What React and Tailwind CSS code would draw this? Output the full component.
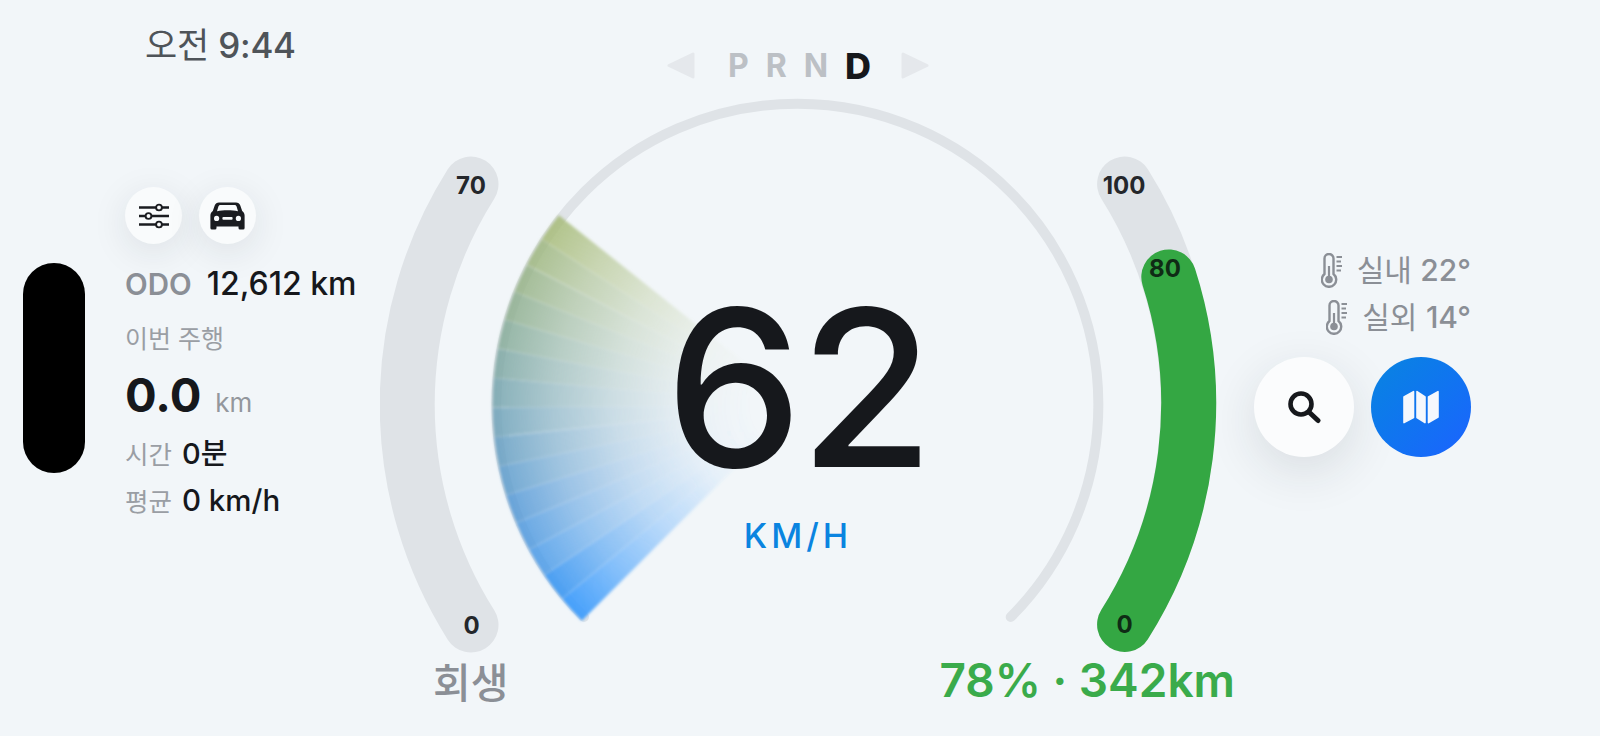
import React from 'react'

const CX = 797.5
const CY = 405
const FAN_R = 305

const lerp = (a, b, t) => a + (b - a) * t

// fan colour stops, bottom of the sweep to top
const FAN_COLORS = [
  [0, [66, 160, 255]],
  [0.3, [88, 155, 215]],
  [0.55, [118, 165, 178]],
  [0.8, [148, 178, 140]],
  [1, [172, 190, 120]],
]

const fanColor = (t) => {
  for (let i = 1; i < FAN_COLORS.length; i++) {
    const [t0, c0] = FAN_COLORS[i - 1]
    const [t1, c1] = FAN_COLORS[i]
    if (t <= t1) {
      const k = (t - t0) / (t1 - t0)
      return `rgb(${c0.map((v, j) => Math.round(lerp(v, c1[j], k))).join(',')})`
    }
  }
  return 'rgb(172,190,120)'
}

const polar = (deg, r) => {
  const a = (deg * Math.PI) / 180
  return [CX + Math.cos(a) * r, CY + Math.sin(a) * r]
}

const STEP = 5.57
const START = 135
const SWEEP = 83.5

const Fan = () => {
  const wedges = []
  for (let i = 0; i < 15; i++) {
    const d = i * STEP
    const [x1, y1] = polar(START + d, FAN_R)
    const [x2, y2] = polar(START + d + STEP - 0.06, FAN_R)
    wedges.push({
      id: `fan${i}`,
      d: `M${CX} ${CY} L${x1} ${y1} A${FAN_R} ${FAN_R} 0 0 1 ${x2} ${y2} Z`,
      color: fanColor((d + STEP / 2) / SWEEP),
      boost: i < 2 ? 1.12 : 1,
    })
  }
  return (
    <>
      <defs>
        <filter id="fanBlur" x="-5%" y="-5%" width="110%" height="110%">
          <feGaussianBlur stdDeviation="1.7" />
        </filter>
        {wedges.map((w) => (
          <radialGradient key={w.id} id={w.id} gradientUnits="userSpaceOnUse" cx={CX} cy={CY} r={FAN_R}>
            <stop offset="0.15" stopColor={w.color} stopOpacity="0" />
            <stop offset="0.35" stopColor={w.color} stopOpacity={0.06 * w.boost} />
            <stop offset="0.6" stopColor={w.color} stopOpacity={0.3 * w.boost} />
            <stop offset="0.8" stopColor={w.color} stopOpacity={0.56 * w.boost} />
            <stop offset="1" stopColor={w.color} stopOpacity={0.88 * w.boost} />
          </radialGradient>
        ))}
      </defs>
      <g filter="url(#fanBlur)">
        {wedges.map((w) => (
          <path key={w.id} d={w.d} fill={`url(#${w.id})`} />
        ))}
      </g>
    </>
  )
}

const Gauge = () => (
  <svg width="860" height="575" viewBox="380 80 860 575" className="block">
    <path d="M584 617 A301 301 0 1 1 1010.7 617" fill="none" stroke="#dfe3e7" strokeWidth="10" strokeLinecap="round" />
    <Fan />
    <path d="M471 625 A413 413 0 0 1 471 184" fill="none" stroke="#dfe3e7" strokeWidth="55" strokeLinecap="round" />
    <path d="M1124.6 184 A413 413 0 0 1 1124.6 624.5" fill="none" stroke="#dfe3e7" strokeWidth="55" strokeLinecap="round" />
    <path d="M1124.6 624.5 A413 413 0 0 0 1168.8 277" fill="none" stroke="#34a743" strokeWidth="55" strokeLinecap="round" />
    <text x="471" y="185" textAnchor="middle" dominantBaseline="central" className="text-[24px] font-bold fill-[#24272b]">70</text>
    <text x="471.5" y="625" textAnchor="middle" dominantBaseline="central" className="text-[24px] font-bold fill-[#24272b]">0</text>
    <text x="1124" y="185" textAnchor="middle" dominantBaseline="central" className="text-[24px] font-bold fill-[#24272b]">100</text>
    <text x="1165" y="268" textAnchor="middle" dominantBaseline="central" className="text-[24px] font-bold fill-[#0f2b15]">80</text>
    <text x="1124.5" y="624" textAnchor="middle" dominantBaseline="central" className="text-[24px] font-bold fill-[#0f2b15]">0</text>
  </svg>
)

const Triangle = ({ flip }) => (
  <svg width="28" height="27" viewBox="0 0 28 27" className={flip ? 'rotate-180' : ''}>
    <path d="M2 13.5 L26 2 V25 Z" fill="#e5e8ec" stroke="#e5e8ec" strokeWidth="3" strokeLinejoin="round" />
  </svg>
)

const Slider = () => (
  <svg width="30" height="26" viewBox="0 0 30 26" fill="none" stroke="#1a1c20" strokeWidth="2.6">
    <path d="M0 4.5 H30 M0 13 H30 M0 21.5 H30" />
    <circle cx="20" cy="4.5" r="2.9" fill="#f9fbfc" strokeWidth="1.9" />
    <circle cx="9.5" cy="13" r="2.9" fill="#f9fbfc" strokeWidth="1.9" />
    <circle cx="20" cy="21.5" r="2.9" fill="#f9fbfc" strokeWidth="1.9" />
  </svg>
)

const Car = () => (
  <svg width="35" height="28" viewBox="0 0 35 28">
    <path
      fill="#1a1c20"
      d="M9 0.5 H26 C28 0.5 29.6 1.6 30.3 3.5 L32.2 9 C33.8 10.2 34.6 11.8 34.6 13.6 V26 A1.5 1.5 0 0 1 33.1 27.5 H30 A1.5 1.5 0 0 1 28.5 26 V24.5 H6.5 V26 A1.5 1.5 0 0 1 5 27.5 H1.9 A1.5 1.5 0 0 1 0.4 26 V13.6 C0.4 11.8 1.2 10.2 2.8 9 L4.7 3.5 C5.4 1.6 7 0.5 9 0.5 Z"
    />
    <path fill="#f9fbfc" d="M7 9.2 L8.4 4.6 C8.7 3.6 9.4 3 10.4 3 H24.6 C25.6 3 26.3 3.6 26.6 4.6 L28 9.2 C22 8 13 8 7 9.2 Z" />
    <circle cx="6.6" cy="16.4" r="2.6" fill="#f9fbfc" />
    <circle cx="28.4" cy="16.4" r="2.6" fill="#f9fbfc" />
    <rect x="12.4" y="15" width="10.2" height="2.8" rx="1" fill="#f9fbfc" />
  </svg>
)

const Thermo = () => (
  <svg width="22" height="35" viewBox="0 0 22 35" fill="none" stroke="#8b8f96" strokeWidth="2.4">
    <path d="M3.5 21 V5.5 A4.5 4.5 0 0 1 12.5 5.5 V21 A7.2 7.2 0 1 1 3.5 21 Z" />
    <circle cx="8" cy="26.5" r="3.8" fill="#8b8f96" stroke="none" />
    <path d="M8 26 V13" strokeWidth="2.2" />
    <path d="M15.5 4 H21 M15.5 8.5 H20 M15.5 13 H21 M15.5 17.5 H20" strokeWidth="1.8" />
  </svg>
)

const SearchIcon = () => (
  <svg width="34" height="34" viewBox="0 0 34 34" fill="none" stroke="#16181c" strokeLinecap="round">
    <circle cx="14" cy="14" r="10.5" strokeWidth="4.6" />
    <path d="M23 23 L31 30.5" strokeWidth="5" />
  </svg>
)

const MapIcon = () => (
  <svg width="36" height="34" viewBox="0 0 36 34" fill="#f5f8fd" stroke="#f5f8fd" strokeWidth="1.6" strokeLinejoin="round">
    <path d="M1 7 L10.5 1.6 V27.6 L1 32.6 Z" />
    <path d="M14 1.6 L22 7 V32.6 L14 27.6 Z" />
    <path d="M25.5 7 L35 1.6 V27 L25.5 32.6 Z" />
  </svg>
)

const App = () => {
  return (
    <div className="flex h-[736px] w-full overflow-hidden bg-[#f2f6f9] font-['Inter','Noto_Sans_CJK_KR',sans-serif]">
      <div className="ml-[23px] mr-[40px] mt-[263px] h-[210px] w-[62px] flex-none rounded-full bg-black" />

      <div className="w-[255px] flex-none">
        <div className="ml-[20px] mt-[23px] h-[44px] text-[35px] leading-[44px] tracking-[-0.3px] text-[#4f5459]">
          오전 <span className="font-medium">9:44</span>
        </div>

        <div className="mt-[120px] flex gap-[17px]">
          <div className="flex h-[57px] w-[57px] items-center justify-center rounded-full bg-[#f9fbfc] shadow-[0_8px_36px_rgba(30,40,50,0.1)]">
            <Slider />
          </div>
          <div className="flex h-[57px] w-[57px] items-center justify-center rounded-full bg-[#f9fbfc] shadow-[0_8px_36px_rgba(30,40,50,0.1)]">
            <Car />
          </div>
        </div>

        <div className="mt-[21px] flex h-[38px] items-baseline gap-[15px] leading-[38px]">
          <span className="text-[29.5px] font-semibold text-[#8b8f96]">ODO</span>
          <span className="text-[32px] font-medium text-[#16181c]">12,612 km</span>
        </div>

        <div className="mt-[18px] h-[36px] text-[25px] leading-[36px] text-[#9a9ea4]">이번 주행</div>

        <div className="mt-[8px] flex h-[60px] items-baseline gap-[14px] leading-[60px]">
          <span className="text-[47px] font-bold text-[#16181c]">0.0</span>
          <span className="text-[26px] text-[#93979d]">km</span>
        </div>

        <div className="mt-[11px] flex h-[36px] items-baseline gap-[10px] leading-[36px]">
          <span className="text-[25.5px] text-[#9a9ea4]">시간</span>
          <span className="text-[29px] font-medium text-[#16181c]">0분</span>
        </div>

        <div className="mt-[10px] flex h-[36px] items-baseline gap-[10px] leading-[36px]">
          <span className="text-[25.5px] text-[#9a9ea4]">평균</span>
          <span className="text-[29.5px] font-medium text-[#16181c]">0 km/h</span>
        </div>
      </div>

      <div className="relative w-[860px] flex-none">
        <div className="flex h-[80px] items-center justify-center pr-[24px] pt-[51px]">
          <div className="flex h-[29px] items-center">
            <Triangle />
            <div className="ml-[33px] mr-[30px] flex items-center gap-[17px] font-bold">
              <span className="text-[32px] leading-none text-[#bcc0c5]">P</span>
              <span className="text-[32px] leading-none text-[#bcc0c5]">R</span>
              <span className="text-[32px] leading-none text-[#bcc0c5]">N</span>
              <span className="text-[36px] font-extrabold leading-none text-[#16181c]">D</span>
            </div>
            <Triangle flip />
          </div>
        </div>

        <Gauge />

        <div className="flex h-[81px] items-start justify-between">
          <span className="ml-[53px] mt-[4px] text-[41px] font-medium leading-[48px] text-[#8b8f96]">회생</span>
          <span className="mr-[5px] mt-[-3px] text-[46px] font-semibold leading-[56px] text-[#3aab4b]">78% · 342km</span>
        </div>

        <div className="absolute left-0 right-0 top-[283px] flex flex-col items-center pr-[24px]">
          <div className="text-[218px] font-[550] leading-[210px] tracking-[-3px] text-[#16181c]">62</div>
          <div className="mt-[21px] text-[34px] font-medium leading-[44px] tracking-[4px] text-[#0a84e0]">KM/H</div>
        </div>
      </div>

      <div className="flex w-[231px] flex-none flex-col items-end pt-[250px]">
        <div className="flex h-[40px] items-center gap-[14px] text-[30px] leading-[40px] text-[#8b8f96]">
          <Thermo />
          <span>실내 <span className="font-medium">22°</span></span>
        </div>
        <div className="mt-[7px] flex h-[40px] items-center gap-[14px] text-[30px] leading-[40px] text-[#8b8f96]">
          <Thermo />
          <span>실외 <span className="font-medium">14°</span></span>
        </div>
        <div className="mt-[20px] flex gap-[17px]">
          <div className="flex h-[100px] w-[100px] items-center justify-center rounded-full bg-[#fbfcfd] shadow-[0_14px_50px_rgba(30,40,50,0.12)]">
            <SearchIcon />
          </div>
          <div className="flex h-[100px] w-[100px] items-center justify-center rounded-full bg-gradient-to-br from-[#0a84e0] to-[#1c62ff]">
            <MapIcon />
          </div>
        </div>
      </div>
    </div>
  )
}

export default App
